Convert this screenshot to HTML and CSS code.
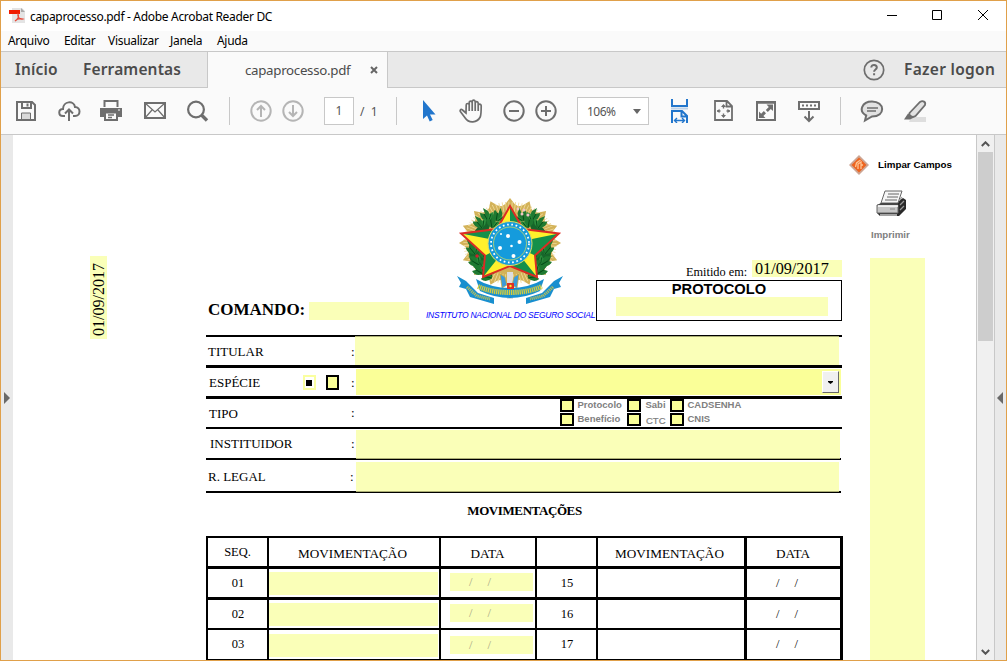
FILE: index.html
```html
<!DOCTYPE html>
<html lang="pt-BR">
<head>
<meta charset="utf-8">
<title>capaprocesso.pdf - Adobe Acrobat Reader DC</title>
<link rel="stylesheet" href="styles.css">
</head>
<body>
<div class="window">
  <header class="titlebar">
    <svg class="app-icon" width="17" height="16" viewBox="0 0 17 16"><path d="M3 0h10l3 3v12H3z" fill="#e4e4e4"/><path d="M12 0l4 4h-4z" fill="#aaa"/><path d="M0 2h11v4H0z" fill="#f01c00"/><path d="M6 13c3-2 4-5 3-7c-1 3 2 6 5 5c-3-1-6 0-8 2z" fill="none" stroke="#e8493a" stroke-width="1.2"/></svg>
    <span class="window-title">capaprocesso.pdf - Adobe Acrobat Reader DC</span>
    <svg class="window-controls" width="102" height="12" viewBox="0 0 102 12" fill="none" stroke="#000"><path d="M0 5.500h10M45.500 .500h9v9h-9zM91 0l10 10M101 0L91 10"/></svg>
  </header>
  <nav class="menubar"><span class="m1">Arquivo</span><span class="m2">Editar</span><span class="m3">Visualizar</span><span class="m4">Janela</span><span class="m5">Ajuda</span></nav>
  <div class="tabs">
    <div class="tabs-left"><span class="home">Início</span><span class="tools">Ferramentas</span></div>
    <div class="tab"><span class="tab-name">capaprocesso.pdf</span><svg width="8" height="8" viewBox="0 0 8 8" stroke="#666" stroke-width="2"><path d="M1 1l6 6M7 1L1 7"/></svg></div>
    <div class="tabs-right">
      <svg width="22" height="22" viewBox="0 0 22 22" fill="none" stroke="#6e6e6e" stroke-width="1.700"><circle cx="11" cy="11" r="9.700"/><path d="M8.300 8.500c0-3.600 5.500-3.300 5.500 0c0 2-2.700 2-2.700 4.200M11.100 14.300v2" stroke-width="2"/></svg>
      <span class="logon">Fazer logon</span>
    </div>
  </div>
  <div class="toolbar">
    <svg class="ic" viewBox="0 0 24 24"><path d="M3 3h15l3 3v15H3zM8 3v6h9V3M13.500 4.500v3"/><path d="M7.500 20v-6h9v6" fill="#d9d9d9" stroke-width="1"/></svg>
    <svg class="ic" viewBox="0 0 24 24"><path d="M8 17H6c-5 0-5-7 0-7c0-8 11-9 12-2c6 0 6 9 0 9h-2M12 22V11M8 14.500l4-4l4 4"/></svg>
    <svg class="ic" viewBox="0 0 24 24"><path d="M5.500 8V2h13v6"/><path d="M1 9h22v9h-4v-4H5v4H1z" fill="#6e6e6e" stroke="none"/><path d="M6 13.500h12V21H6z" fill="#fafafa"/><path d="M9 16h6M9 18.500h4" stroke-width="1.400"/><path d="M19 11h2" stroke="#fff" stroke-width="1"/></svg>
    <svg class="ic" viewBox="0 0 24 24"><path d="M2 4h20v15H2z"/><path d="M2 4l10 9L22 4M2 19l7-8M22 19l-7-8" stroke-width="1.200"/></svg>
    <svg class="ic" viewBox="0 0 24 24"><circle cx="11" cy="10.500" r="7.900" stroke-width="2.200"/><path d="M16.500 16l5.500 5.500" stroke-width="3.400"/></svg>
    <i class="separator"></i>
    <svg class="ic faded" viewBox="0 0 24 24"><circle cx="12" cy="12" r="9.700"/><path d="M12 18V7M8 11l4-4l4 4"/></svg>
    <svg class="ic faded" viewBox="0 0 24 24"><circle cx="12" cy="12" r="9.700"/><path d="M12 6v11M8 13l4 4l4-4"/></svg>
    <div class="page-box">1</div>
    <span class="page-total">/&nbsp; 1</span>
    <i class="separator"></i>
    <svg class="ic" viewBox="0 0 24 24"><path d="M6 1v19l4-3.500l2.700 6l3-1.500l-2.700-5.500h5.500z" fill="#2276cc" stroke="none"/></svg>
    <svg class="ic" viewBox="0 0 24 24"><path d="M7 14L3.500 11c-2-1.500-3 .5-1.800 2l4.500 6c3.500 5.500 12 5 15-1c1-2 1-7 1-11c0-2.500-3-2.500-3 0v5V4.500c0-2.500-3-2.500-3 0V12V3c0-2.500-3-2.500-3 0v9V4c0-2.500-3-2.500-3 0v8V6c0-2-3-2-3 0z" stroke-width="1.700"/></svg>
    <svg class="ic" viewBox="0 0 24 24"><circle cx="12" cy="12" r="9.700"/><path d="M7 12h10"/></svg>
    <svg class="ic" viewBox="0 0 24 24"><circle cx="12" cy="12" r="9.700"/><path d="M7 12h10M12 7v10"/></svg>
    <div class="zoom-box"><span>106%</span><svg width="8" height="5" viewBox="0 0 8 5"><path d="M0 0h8L4 5z" fill="#666"/></svg></div>
    <svg class="ic blue" viewBox="0 0 24 24"><path d="M4 0v7h15V0M4 24V12h10l5 5v7M13.500 12v5.500H19"/><path d="M7 21.500h9M9 19l-2.500 2.500L9 24M14 19l2.500 2.500L14 24" stroke-width="1.400"/><path d="M3 9.500h17" stroke="#bdd2e9"/></svg>
    <svg class="ic" viewBox="0 0 24 24"><path d="M4 2h12l5 5v14H4zM15.500 2v5.500H21" stroke-width="1.800"/><path d="M12.500 6v3.500M12.500 14.500V18M6 12h3.500M15.500 12H19" stroke-width="1.400"/><path d="M10 8h5l-2.500-3zM10 16h5l-2.500 3zM8.500 9.700v4.600L6 12zM16.500 9.700v4.600L19 12z" fill="#6e6e6e" stroke="none"/></svg>
    <svg class="ic" viewBox="0 0 24 24"><path d="M3 3h18v18H3z"/><path d="M3 3.500h18" stroke-width="2.500"/><path d="M12.500 5.500H19V12l-2.200-2.100l-3 3l-2-2l3-3zM5 12.500l2.200 2.200l2.600-2.600l2.200 2.200l-2.600 2.600l2.100 2.100H5z" fill="#6e6e6e" stroke="none"/></svg>
    <svg class="ic" viewBox="0 0 24 24"><path d="M2 3h20v7H2zM12 12v10M7.500 17.500L12 22l4.500-4.500"/><path d="M5 6.500h15" stroke-dasharray="2 2"/></svg>
    <i class="separator"></i>
    <svg class="ic" viewBox="0 0 24 24"><path d="M12 2.500c13 0 14 15 0 15l-7 4l1.200-5C-2 12 2 2.500 12 2.500z" fill="#e2e2e2"/><path d="M7 9h11M7 12h9" stroke-width="1.300"/></svg>
    <svg class="ic" viewBox="0 0 24 24"><path d="M8 18h15v5H6z" fill="#dedede" stroke="none"/><path d="M6.500 14L17 3c3-2 6 0 5 3L12.500 17c-3 2-7 0-6-3z" fill="#e2e2e2" stroke-width="1.800"/><path d="M5 14.500l6 4l-4 2H1z" fill="#6e6e6e" stroke="none"/></svg>
  </div>
  <main class="viewer">
    <div class="left-pane"><svg width="6" height="12" viewBox="0 0 6 12"><path d="M0 0v12l6-6z" fill="#696969"/></svg></div>
    <div class="page">
      <aside class="margin-left"><div class="side-date">01/09/2017</div></aside>
      <section class="form">
        <div class="form-head">
          <div class="command"><span>COMANDO:</span><i></i></div>
          <div class="emblem">
            <svg width="107" height="108" viewBox="0 0 107 108">
              <defs>
                <path id="ray" d="M-9 0l1-37l4-3l4-6l4 6l4 3l1 37l-1 37l-4 3l-4 6l-4-6l-4-3z"/>
                <g id="leaf"><path d="M0 0q-8-1-8-8l5 1l-2-6l5 3q3 4 0 10z" fill="#1f7a31"/><path d="M0 0q6-3 5-9l-4 2z" fill="#2c8f3e"/><path d="M0 0l-4-7M1-1l2-6" stroke="#064b18" stroke-width=".9"/></g>
                <g id="branch">
                  <path d="M37 18Q14 30 12 50T29 80l9-4l-16-24l6-10z" fill="#17662a"/>
                  <use href="#leaf" transform="translate(31 24)"/><use href="#leaf" transform="translate(39 24) rotate(40)"/><use href="#leaf" transform="translate(25 31) rotate(-10)"/><use href="#leaf" transform="translate(35 31) rotate(20)"/><use href="#leaf" transform="translate(24 52) rotate(-20)"/><use href="#leaf" transform="translate(18 57) rotate(-10)"/><use href="#leaf" transform="translate(28 62) rotate(10)"/><use href="#leaf" transform="translate(22 68) rotate(-30)"/><use href="#leaf" transform="translate(30 73) rotate(-20)"/><use href="#leaf" transform="translate(35 81) rotate(-50)"/><use href="#leaf" transform="translate(26 77) rotate(-30)"/><use href="#leaf" transform="translate(18 50)"/>
                </g>
              </defs>
              <g transform="translate(53 46) scale(1.110 .980)" fill="#d3b258">
                <use href="#ray"/><use href="#ray" transform="rotate(22.500)"/><use href="#ray" transform="rotate(45)"/><use href="#ray" transform="rotate(67.500)"/><use href="#ray" transform="rotate(90)"/><use href="#ray" transform="rotate(112.500)"/><use href="#ray" transform="rotate(135)"/><use href="#ray" transform="rotate(157.500)"/>
                <circle r="37" fill="none" stroke="#efdb9b" stroke-width="10" stroke-dasharray=".7 2"/>
              </g>
              <use href="#branch"/>
              <use href="#branch" transform="translate(106 0) scale(-1 1)"/>
              <g fill="#d01f2d"><circle cx="17" cy="37" r="1.500"/><circle cx="19" cy="48" r="1.700"/><circle cx="20" cy="59" r="1.700"/><circle cx="26" cy="71" r="1.500"/></g>
              <g fill="#efc6c6"><circle cx="61" cy="12" r="1.400"/><circle cx="67" cy="13" r="1.600"/><circle cx="65" cy="17" r="1.500"/><circle cx="71" cy="18" r="1.600"/></g>
              <path d="M50 75h6v27h-6z" fill="#ddd"/>
              <path d="M53 9l13 23l36 4.500l-24 22l2 21.500l-27-11l-27 11l2-21.500l-24-22L40 32z" fill="#fff12c"/>
              <path d="M53 9l13 23l-13 14zM102 36.500l-24 22l-25-12zM80 80l-27-11V46zM26 80l2-21.500L53 46zM4 36.500L40 32l13 14z" fill="#15904a"/>
              <path d="M53 9l13 23l36 4.500l-24 22l2 21.500l-27-11l-27 11l2-21.500l-24-22L40 32z" fill="none" stroke="#dc2c24" stroke-width="1.900"/>
              <circle cx="53" cy="46.500" r="22" fill="#159bdc" stroke="#e5dc62" stroke-width="1"/>
              <circle cx="53" cy="46.500" r="19" fill="none" stroke="#fff" stroke-width="1.800" stroke-dasharray="1.700 2.600"/>
              <circle cx="53" cy="46.500" r="16.500" fill="none" stroke="#c7db67" stroke-width=".8"/>
              <g fill="#fff"><circle cx="51" cy="39" r="2"/><circle cx="62.500" cy="45" r="2"/><circle cx="43" cy="51" r="2"/><circle cx="56.500" cy="59" r="2"/><circle cx="54.500" cy="49" r="1.300"/><circle cx="44" cy="37" r="1"/></g>
              <path d="M43 77l5 3l2 8l-5 3zM62 77l-5 3l-2 8l5 3z" fill="#3b9bdb" stroke="#d5a72c" stroke-width=".7"/>
              <path d="M0 79l9 5l12 12l16 5v6l-24-7l-4-8l-7-2l2-4zM106 79l-9 5l-12 12l-16 5v6l24-7l4-8l7-2l-2-4z" fill="#188fcf"/>
              <path d="M19 82q15 9 34 9t34-9l-4 12q-15 7-30 7t-30-7z" fill="#188fcf"/>
              <path d="M21 89.500q14 6 32 6t32-6" fill="none" stroke="#d4cd3f" stroke-width="5" stroke-dasharray="1.400 .7"/>
              <path d="M10 90l10 9l13 3M96 90l-10 9l-13 3" fill="none" stroke="#b8bd58" stroke-width="3" stroke-dasharray="1.200 .8"/>
              <path d="M50 86h7v6h-7z" fill="#dd3025"/><circle cx="53.500" cy="89" r="1.200" fill="#fff12c"/>
            </svg>
            <span>INSTITUTO NACIONAL DO SEGURO SOCIAL</span>
          </div>
          <div class="issue">
            <div class="issued"><span>Emitido em:</span><b>01/09/2017</b></div>
            <div class="protocol"><strong>PROTOCOLO</strong><i></i></div>
          </div>
        </div>
        <div class="row r-titular"><span class="label">TITULAR</span><span class="colon">:</span><i class="field"></i></div>
        <div class="row r-especie"><span class="label">ESPÉCIE</span><i class="mark"></i><i class="check"></i><span class="colon">:</span><div class="field select"><span><svg width="5" height="3" viewBox="0 0 5 3"><path d="M0 0h5v1L2.500 3L0 1z"/></svg></span></div></div>
        <div class="row r-tipo"><span class="label">TIPO</span><span class="colon">:</span>
          <div class="options"><i></i><span>Protocolo</span><i></i><span>Sabi</span><i></i><span>CADSENHA</span><i></i><span>Benefício</span><i></i><span class="ctc">CTC</span><i></i><span>CNIS</span></div>
        </div>
        <div class="row r-inst"><span class="label">INSTITUIDOR</span><span class="colon">:</span><i class="field"></i></div>
        <div class="row r-legal"><span class="label">R. LEGAL</span><span class="colon">:</span><i class="field"></i></div>
        <h2>MOVIMENTAÇÕES</h2>
        <div class="moves">
          <div class="tr th"><div class="seq">SEQ.</div><div>MOVIMENTAÇÃO</div><div>DATA</div><div></div><div>MOVIMENTAÇÃO</div><div>DATA</div></div>
          <div class="tr one"><div>01</div><div class="fill"><i></i></div><div class="date"><i>/<b>/</b></i></div><div>15</div><div></div><div class="plain">/<b>/</b></div></div>
          <div class="tr two"><div>02</div><div class="fill"><i></i></div><div class="date"><i>/<b>/</b></i></div><div>16</div><div></div><div class="plain">/<b>/</b></div></div>
          <div class="tr three"><div>03</div><div class="fill"><i></i></div><div class="date"><i>/<b>/</b></i></div><div>17</div><div></div><div class="plain">/<b>/</b></div></div>
        </div>
      </section>
      <aside class="margin-right">
        <div class="clear"><svg width="20" height="20" viewBox="0 0 20 20"><path d="M10 0l10 10l-10 10L0 10z" fill="#cda694"/><path d="M10 2.500l7.500 7.500l-7.500 7.500l-7.500-7.500z" fill="#ee641e"/><path d="M9 14V9l3-2v3h2M6.500 12l1-4l4-3M12 10v4" fill="none" stroke="#ffc593" stroke-width="1.300"/></svg><span>Limpar Campos</span></div>
        <svg class="printer" width="30" height="28" viewBox="0 0 30 28"><path d="M1 15l6-3h14l6-4l3 2v9l-7 7H4l-3-3z" fill="#292929"/><path d="M9 1h17l-4 12H5z" fill="#f5f5f5" stroke="#666"/><path d="M12 4h11M11 7h11M9 10h12" stroke="#666"/><path d="M1 15h21v8H1z" fill="#c6c6c6" stroke="#666"/><path d="M2 16h20" stroke="#fff" stroke-width="1.500"/><path d="M14 19h5" stroke="#888"/><path d="M4 25h17" stroke="#ccc" stroke-width="1.500"/><path d="M24 15l4-4M24 20l4-4M23 11l3-4" stroke="#999" stroke-width="1.200"/></svg>
        <span class="print-label">Imprimir</span>
        <i class="side-field"></i>
      </aside>
    </div>
    <div class="scrollbar"><svg width="9" height="6" viewBox="0 0 9 6" fill="none" stroke="#555" stroke-width="2"><path d="M.8 5l3.700-3.700L8.200 5"/></svg><i class="thumb"></i><svg class="down" width="9" height="6" viewBox="0 0 9 6" fill="none" stroke="#555" stroke-width="2"><path d="M.8 1l3.700 3.700L8.200 1"/></svg></div>
    <div class="right-pane"><svg width="6" height="12" viewBox="0 0 6 12"><path d="M6 0v12L0 6z" fill="#696969"/></svg></div>
  </main>
</div>
</body>
</html>
```
FILE: styles.css
```css
* { box-sizing: border-box; }
body { margin: 0; overflow: hidden; }
i, b, strong { font-style: normal; }
svg { display: block; flex: none; }
.window { width: 1007px; height: 661px; border: 1px solid #e0a04a; background: #fafafa; font-family: "Noto Sans", "Open Sans", sans-serif; display: flex; flex-direction: column; white-space: nowrap; overflow: hidden; }
.titlebar { height: 30px; background: #fff; display: flex; align-items: center; padding-left: 8px; flex: none; }
.window-title { font-size: 12px; margin-left: 4px; letter-spacing: -.32px; width: 300px; }
.window-controls { margin-left: 557px; }
.menubar { height: 20px; flex: none; display: flex; padding-left: 7px; font-size: 12px; line-height: 20px; letter-spacing: -.3px; }
.m1 { width: 56px; }
.m2 { width: 44px; }
.m3 { width: 62px; }
.m4 { width: 47px; }
.tabs { height: 37px; flex: none; display: flex; background: #e9e9e9; border-top: 1px solid #c8c8c8; color: #4b4b4b; line-height: 35px; }
.tabs-left { width: 206px; display: flex; padding-left: 14px; font-size: 15.5px; font-weight: 600; letter-spacing: .15px; border-bottom: 1px solid #c8c8c8; }
.home { width: 68px; }
.tab { width: 181px; background: #fafafa; border: solid #c8c8c8; border-width: 0 1px; display: flex; align-items: center; padding-left: 37px; font-size: 13.3px; letter-spacing: -.3px; }
.tab-name { width: 125px; }
.tabs-right { flex: 1; display: flex; align-items: center; padding-left: 475px; border-bottom: 1px solid #c8c8c8; font-size: 15.5px; font-weight: 600; letter-spacing: .3px; }
.logon { margin-left: 19px; }
.toolbar { height: 47px; flex: none; display: grid; grid-template-columns: 43px 42px 44px 42px 44px 20px 32px 43px 36px 36px 21px 42px 43px 32px 43px 91px 43px 43px 43px 43px 20px 43px 30px; align-items: center; padding-left: 13px; border-bottom: 1px solid #c8c8c8; color: #555; }
.ic { width: 24px; height: 24px; fill: none; stroke: #6e6e6e; stroke-width: 2; }
.faded { stroke: #b5b5b5; }
.blue { stroke: #2276cc; }
.separator { width: 1px; height: 28px; background: #c8c8c8; }
.page-box { width: 30px; height: 28px; border: 1px solid #c8c8c8; background: #fff; text-align: center; line-height: 26px; font-size: 12px; }
.page-total { font-size: 12px; }
.zoom-box { width: 72px; height: 28px; border: 1px solid #c8c8c8; background: #fff; display: flex; align-items: center; padding-left: 9px; font-size: 12px; letter-spacing: -.5px; }
.zoom-box span { width: 46px; }
.viewer { flex: 1; display: flex; min-height: 0; }
.left-pane { width: 12px; background: #e9e9e9; padding: 257px 0 0 3px; }
.right-pane { width: 12px; background: #e9e9e9; border-left: 1px solid #c8c8c8; padding: 257px 0 0 2px; }
.scrollbar { width: 18px; background: #f0f0f0; border-left: 1px solid #c8c8c8; padding-top: 6px; display: flex; flex-direction: column; align-items: center; }
.thumb { width: 15px; height: 189px; margin-top: 5px; background: #cdcdcd; }
.down { margin-top: auto; margin-bottom: 5px; }
.page { width: 963px; background: #fff; display: flex; color: #000; }
.margin-left { width: 193px; padding: 121px 0 0 77px; }
.side-date { width: 17px; height: 83px; background: #faffb8; writing-mode: vertical-rl; transform: rotate(180deg); font: 16px/17px "Liberation Serif", serif; padding-top: 3px; }
.form { width: 637px; flex: none; font-family: "Liberation Serif", serif; font-size: 13px; }
.form-head { height: 200px; display: flex; }
.command { width: 218px; padding: 165px 0 0 2px; display: flex; font-size: 17px; font-weight: bold; line-height: 20px; }
.command span { width: 101px; }
.command i { width: 100px; height: 18px; margin-top: 2px; background: #faffb8; }
.emblem { width: 172px; padding-top: 62px; }
.emblem svg { margin-left: 33px; }
.emblem span { display: block; margin-left: 2px; font: italic 8.500px/10px "Liberation Sans", sans-serif; letter-spacing: -.26px; color: #00f; margin-top: 5px; }
.issue { width: 246px; padding-top: 125px; }
.issued { display: flex; height: 20px; padding-left: 90px; }
.issued span { width: 66px; font-size: 12.300px; line-height: 24px; }
.issued b { width: 90px; height: 17px; font-weight: normal; font-size: 16.200px; line-height: 18px; padding-left: 3px; background: #faffb8; }
.protocol { height: 41px; border: 1px solid #000; display: flex; flex-direction: column; align-items: center; font-family: "Liberation Sans", sans-serif; font-size: 14.700px; line-height: 16px; }
.protocol i { width: 212px; height: 19px; margin-left: 5px; background: #faffb8; }
.row { width: 636px; display: flex; border-top: 2px solid #000; padding-left: 2px; }
.label { width: 142px; line-height: 29px; }
.colon { width: 5px; line-height: 29px; padding-left: 1px; }
.field { background: #faffb8; }
.r-titular { height: 30px; }
.r-titular .label, .r-titular .colon { line-height: 30px; }
.r-titular .field { width: 484px; height: 29px; margin-top: -1px; border-top: 1px solid #abae74; }
.r-especie, .r-tipo { height: 31px; border-top-width: 3px; }
.r-especie .label { width: 95px; padding-left: 1px; }
.mark { width: 13px; height: 15px; border: 2px solid #faffa0; margin: 7px 10px 0 0; padding: 3px 2px 2px 1px; background: #000 content-box; }
.check { width: 13px; height: 15px; border: 2px solid #000; background: #faff98; margin: 7px 12px 0 0; }
.r-especie .colon { padding-left: 0; }
.r-especie .field { width: 485px; height: 26px; margin-top: 1px; background: #faff98; }
.select { padding: 2px 2px 0 466px; }
.select span { display: flex; width: 17px; height: 22px; background: #f0f0f0; border: 1px solid #fff; border-right-color: #696969; border-bottom-color: #696969; align-items: center; justify-content: center; }
.r-tipo .label { padding-left: 1px; line-height: 29px; }
.r-tipo .colon { line-height: 27px; }
.options { width: 206px; margin-left: 205px; display: grid; grid-template-columns: 17px 50px 18px 25px 17px 70px; grid-template-rows: 14px 14px; font: bold 9.500px/12px "Liberation Sans", sans-serif; color: #808080; }
.options i { width: 14px; height: 13px; background: #faff98; border: 2px solid #000; }
.options span { padding-left: .500px; }
.options .ctc { line-height: 15px; padding-left: 1px; font-weight: normal; -webkit-text-stroke: .2px #808080; }
.r-inst { height: 31px; padding-left: 4px; }
.r-inst .label { width: 140px; }
.r-inst .field { width: 484px; height: 29px; margin: 1px 0 0 1px; border-bottom: 1px solid #abae74; position: relative; }
.r-legal { height: 35px; border-bottom: 2px solid #000; width: 635px; }
.r-legal .label, .r-legal .colon { line-height: 33px; }
.r-legal .colon { padding-left: 0; }
.r-legal .field { width: 483px; height: 30px; margin: 2px 0 0 1px; border-bottom: 1px solid #abae74; position: relative; }
h2 { height: 43px; margin: 0; font-size: 13px; line-height: 36px; text-align: center; letter-spacing: -.4px; }
.moves { width: 637px; border-bottom: 2px solid #000; }
.tr { display: grid; grid-template-columns: 61px 172px 96px 61px 148px 99px; height: 31px; border-top: 3px solid #000; }
.tr > div { border-left: 2px solid #000; text-align: center; line-height: 28px; font-size: 12.500px; padding-left: 1px; }
.tr > div:last-child { border-left-width: 3px; border-right: 3px solid #000; }
.tr.th { height: 30px; border-top-width: 2px; }
.tr.th > div { padding: 2px 3px 0 0; font-size: 13.200px; }
.tr.th > div:nth-child(3), .tr.th > div:last-child { padding-right: 1px; }
.tr.th > .seq { padding: 0; font-size: 12.500px; }
.three { border-top-width: 2px; }
.tr.three > div { line-height: 29px; }
.tr > .fill { padding-left: 0; }
.fill i { display: block; width: 169px; height: 23px; margin-top: 3px; background: #faffb8; }
.tr > .date { padding-left: 0; }
.date i { display: block; width: 83px; height: 18px; margin: 4px 0 0 9px; background: #faffb8; color: #a9a986; text-align: left; line-height: 18px; padding-left: 19px; }
.three .date i { margin-top: 6px; }
.three .fill i { margin-top: 4px; }
.tr b { font-weight: normal; margin-left: 15px; }
.tr > .plain { text-align: left; padding-left: 29px; }
.margin-right { width: 133px; flex: none; display: flex; flex-direction: column; font: bold 9.800px/12px "Liberation Sans", sans-serif; }
.clear { display: flex; align-items: center; margin: 20px 0 0 6px; }
.clear span { margin-left: 9px; }
.printer { margin: 15px 0 0 33px; }
.print-label { margin: 11px 0 0 28px; color: #808080; font-size: 9.700px; }
.side-field { width: 55px; flex: 1; margin: 17px 0 0 27px; background: #faffb8; }
```
